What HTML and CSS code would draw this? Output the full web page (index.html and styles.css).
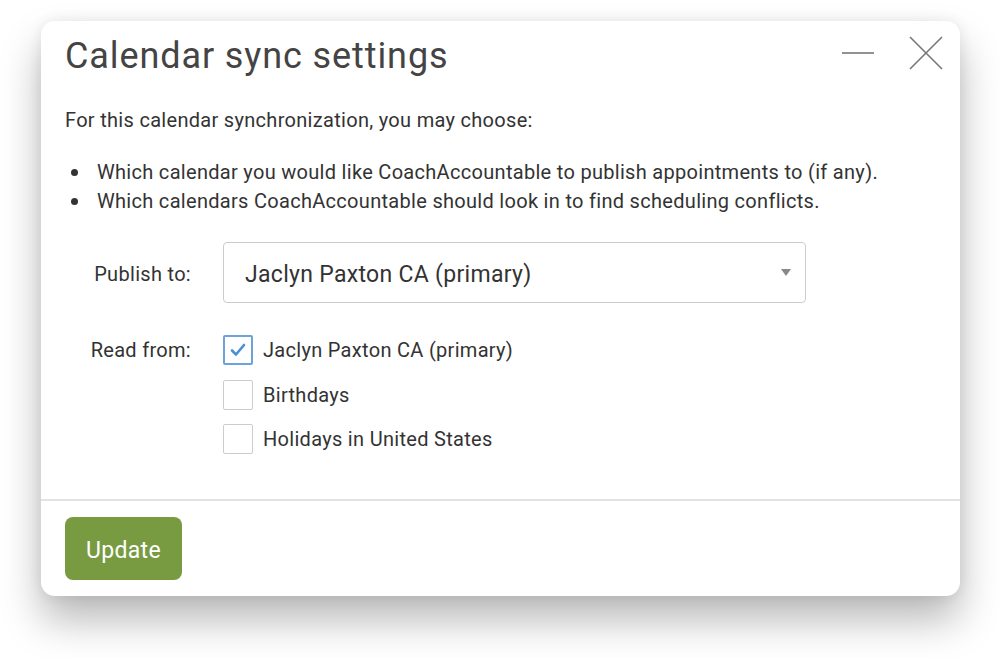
FILE: index.html
```html
<!DOCTYPE html>
<html>
<head>
<meta charset="utf-8">
<link rel="stylesheet" href="styles.css">
</head>
<body>
<div class="dialog">
  <div class="header">
    <h1 class="title">Calendar sync settings</h1>
    <div class="controls">
      <svg class="minimize" width="32" height="4" viewBox="0 0 32 4"><line x1="0" y1="2" x2="32" y2="2" stroke="#777" stroke-width="1.6"/></svg>
      <svg class="close" width="34" height="34" viewBox="0 0 34 34"><path d="M1 1 L33 33 M33 1 L1 33" stroke="#777" stroke-width="1.6" fill="none"/></svg>
    </div>
  </div>
  <div class="content">
    <p class="intro">For this calendar synchronization, you may choose:</p>
    <ul class="bullets">
      <li>Which calendar you would like CoachAccountable to publish appointments to (if any).</li>
      <li>Which calendars CoachAccountable should look in to find scheduling conflicts.</li>
    </ul>
    <div class="form">
      <div class="label label-publish">Publish to:</div>
      <div class="select">
        <span>Jaclyn Paxton CA (primary)</span>
        <span class="arrow"></span>
      </div>
      <div class="label label-read">Read from:</div>
      <div class="checks">
        <div class="check-row">
          <span class="box checked"><svg width="26" height="26" viewBox="0 0 26 26"><path d="M7 13.5 L11 17.5 L19 8" stroke="#4a8fdc" stroke-width="2.6" stroke-linecap="round" stroke-linejoin="round" fill="none"/></svg></span>
          <span>Jaclyn Paxton CA (primary)</span>
        </div>
        <div class="check-row">
          <span class="box"></span>
          <span>Birthdays</span>
        </div>
        <div class="check-row">
          <span class="box"></span>
          <span>Holidays in United States</span>
        </div>
      </div>
    </div>
  </div>
  <div class="footer">
    <button class="btn">Update</button>
  </div>
</div>
</body>
</html>
```

FILE: styles.css
```css
html, body {
  margin: 0;
  padding: 0;
  background: #ffffff;
}
body {
  font-family: Roboto, "Liberation Sans", sans-serif;
  color: #333;
  padding: 21px 0 0 41px;
  width: 1000px;
  height: 658px;
  box-sizing: border-box;
  overflow: hidden;
  letter-spacing: 0.3px;
}
.dialog {
  width: 919px;
  height: 575px;
  background: #fff;
  border-radius: 14px;
  box-shadow: 0 24px 40px rgba(0,0,0,0.28), 0 0 14px rgba(0,0,0,0.08);
  display: flex;
  flex-direction: column;
}
.header {
  display: flex;
  justify-content: space-between;
  align-items: flex-start;
  padding: 14px 17px 0 24px;
}
.title {
  margin: 0;
  font-size: 36px;
  font-weight: 400;
  line-height: 42px;
  letter-spacing: 0.9px;
  color: #444;
}
.controls {
  display: flex;
  align-items: center;
  gap: 35px;
  margin-top: 1px;
}
.content {
  padding: 0 24px;
  flex: 1;
}
.intro {
  margin: 29px 0 0 0;
  font-size: 20px;
  line-height: 28px;
}
.bullets {
  margin: 24px 0 0 0;
  padding-left: 32px;
  font-size: 20px;
  line-height: 29px;
  list-style: none;
}
.bullets li {
  position: relative;
}
.bullets li::before {
  content: "";
  position: absolute;
  left: -26px;
  top: 11px;
  width: 7px;
  height: 7px;
  border-radius: 50%;
  background: #333;
}
.form {
  display: grid;
  grid-template-columns: 126px 583px;
  column-gap: 32px;
  row-gap: 32px;
  margin-top: 26px;
  align-items: start;
}
.label {
  font-size: 20px;
  text-align: right;
}
.label-publish {
  align-self: center;
  padding-top: 2px;
}
.label-read {
  line-height: 30px;
}
.select {
  height: 61px;
  box-sizing: border-box;
  border: 1px solid #ccc;
  border-radius: 4px;
  display: flex;
  align-items: center;
  justify-content: space-between;
  padding: 3px 14px 0 21px;
  font-size: 23px;
  color: #333;
}
.arrow {
  width: 0;
  height: 0;
  margin-top: -3px;
  border-left: 5px solid transparent;
  border-right: 5px solid transparent;
  border-top: 7px solid #888;
}
.checks {
  display: flex;
  flex-direction: column;
  gap: 14.5px;
}
.check-row {
  display: flex;
  align-items: center;
  gap: 10px;
  font-size: 20px;
  height: 30px;
}
.box {
  width: 30px;
  height: 30px;
  box-sizing: border-box;
  border: 1px solid #ccc;
  border-radius: 2px;
  display: flex;
  align-items: center;
  justify-content: center;
}
.box.checked {
  border: 2px solid #6ea2dd;
}
.footer {
  border-top: 2px solid #e2e2e2;
  padding: 16px 24px;
  height: 97px;
  box-sizing: border-box;
}
.btn {
  font-family: Roboto, "Liberation Sans", sans-serif;
  letter-spacing: 0.3px;
  background: #789b42;
  color: #fff;
  border: none;
  border-radius: 8px;
  width: 117px;
  height: 63px;
  font-size: 23px;
  padding: 3px 0 0 0;
}
```
